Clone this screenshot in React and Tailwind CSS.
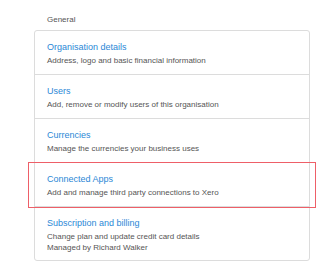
const settings = [
  { title: 'Organisation details', lines: ['Address, logo and basic financial information'] },
  { title: 'Users', lines: ['Add, remove or modify users of this organisation'] },
  { title: 'Currencies', lines: ['Manage the currencies your business uses'] },
  { title: 'Connected Apps', lines: ['Add and manage third party connections to Xero'], highlight: true },
  { title: 'Subscription and billing', lines: ['Change plan and update credit card details', 'Managed by Richard Walker'] },
];

const App = () => {
  return (
    <div className="min-h-screen bg-white pt-[15px] pl-[34px] pr-[15px] font-['Liberation_Sans',Arial,sans-serif]">
      <div className="ml-[13px] h-[10px] text-[8px] leading-[10px] text-[#555]">General</div>
      <div className="mt-[5px] rounded-[3px] border border-[#dcdcdc] bg-white">
        {settings.map((item, i) => (
          <div
            key={item.title}
            className={`relative pl-[12px] pt-[10px] ${i === settings.length - 1 ? 'pb-[7px]' : 'pb-[8px]'} ${i > 0 ? 'border-t border-[#dcdcdc]' : ''}`}
          >
            <div className="text-[9px] leading-[12px] text-[#2b88d6]">{item.title}</div>
            <div className="mt-[2px]">
              {item.lines.map((line) => (
                <div key={line} className="text-[8px] leading-[11px] text-[#555]">{line}</div>
              ))}
            </div>
            {item.highlight && (
              <div className="absolute -left-[7px] -right-[7px] -top-px -bottom-[2px] border border-[#ee5f68]"></div>
            )}
          </div>
        ))}
      </div>
    </div>
  );
};

export default App;
